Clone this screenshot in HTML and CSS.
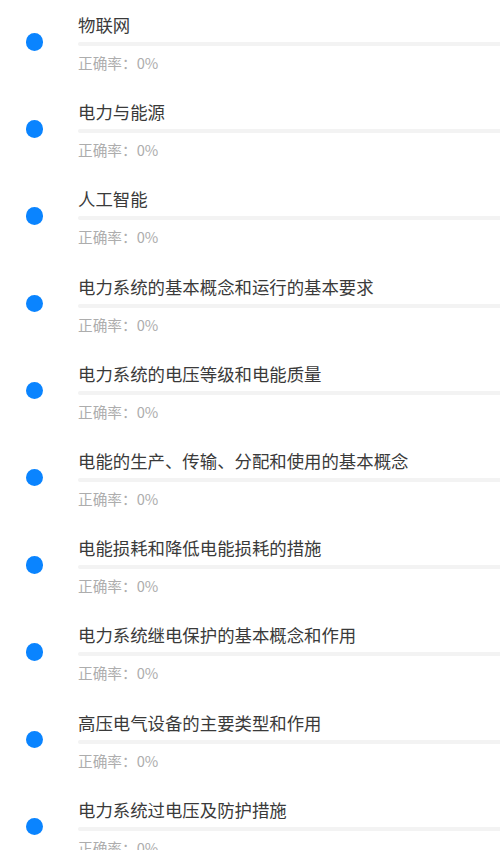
FILE: index.html
```html
<!DOCTYPE html>
<html lang="zh">
<head>
  <meta charset="UTF-8">
  <title>知识点</title>
  <link rel="stylesheet" href="styles.css">
</head>
<body>
  <div class="list">

    <div class="item">
      <span class="dot"></span>
      <div class="info">
        <div class="title">物联网</div>
        <div class="bar"><div class="fill" style="width: 0%"></div></div>
        <div class="rate">正确率：0%</div>
      </div>
    </div>

    <div class="item">
      <span class="dot"></span>
      <div class="info">
        <div class="title">电力与能源</div>
        <div class="bar"><div class="fill" style="width: 0%"></div></div>
        <div class="rate">正确率：0%</div>
      </div>
    </div>

    <div class="item">
      <span class="dot"></span>
      <div class="info">
        <div class="title">人工智能</div>
        <div class="bar"><div class="fill" style="width: 0%"></div></div>
        <div class="rate">正确率：0%</div>
      </div>
    </div>

    <div class="item">
      <span class="dot"></span>
      <div class="info">
        <div class="title">电力系统的基本概念和运行的基本要求</div>
        <div class="bar"><div class="fill" style="width: 0%"></div></div>
        <div class="rate">正确率：0%</div>
      </div>
    </div>

    <div class="item">
      <span class="dot"></span>
      <div class="info">
        <div class="title">电力系统的电压等级和电能质量</div>
        <div class="bar"><div class="fill" style="width: 0%"></div></div>
        <div class="rate">正确率：0%</div>
      </div>
    </div>

    <div class="item">
      <span class="dot"></span>
      <div class="info">
        <div class="title">电能的生产、传输、分配和使用的基本概念</div>
        <div class="bar"><div class="fill" style="width: 0%"></div></div>
        <div class="rate">正确率：0%</div>
      </div>
    </div>

    <div class="item">
      <span class="dot"></span>
      <div class="info">
        <div class="title">电能损耗和降低电能损耗的措施</div>
        <div class="bar"><div class="fill" style="width: 0%"></div></div>
        <div class="rate">正确率：0%</div>
      </div>
    </div>

    <div class="item">
      <span class="dot"></span>
      <div class="info">
        <div class="title">电力系统继电保护的基本概念和作用</div>
        <div class="bar"><div class="fill" style="width: 0%"></div></div>
        <div class="rate">正确率：0%</div>
      </div>
    </div>

    <div class="item">
      <span class="dot"></span>
      <div class="info">
        <div class="title">高压电气设备的主要类型和作用</div>
        <div class="bar"><div class="fill" style="width: 0%"></div></div>
        <div class="rate">正确率：0%</div>
      </div>
    </div>

    <div class="item">
      <span class="dot"></span>
      <div class="info">
        <div class="title">电力系统过电压及防护措施</div>
        <div class="bar"><div class="fill" style="width: 0%"></div></div>
        <div class="rate">正确率：0%</div>
      </div>
    </div>

  </div>
</body>
</html>
```

FILE: styles.css
```css
body {
  margin: 0;
  background: #fff;
  font-family: "Noto Sans CJK SC", "Noto Sans", sans-serif;
  overflow: hidden;
}

.list {
  width: 500px;
}

.item {
  display: flex;
  align-items: flex-start;
  height: 87.2px;
  padding-top: 13px;
  box-sizing: border-box;
}

.dot {
  flex: none;
  width: 17.5px;
  height: 17.5px;
  border-radius: 50%;
  background: #0a84ff;
  margin: 20px 35px 0 25.5px;
}

.info {
  flex: 1;
  min-width: 0;
}

.title {
  font-size: 17.4px;
  line-height: 24px;
  color: #3a3a3a;
}

.bar {
  height: 4px;
  margin-top: 5px;
  border-radius: 2px 0 0 2px;
  background: #f3f3f3;
}

.fill {
  height: 100%;
  background: #0a84ff;
}

.rate {
  margin-top: 7px;
  font-size: 14.67px;
  line-height: 20px;
  color: #adadad;
}
```
